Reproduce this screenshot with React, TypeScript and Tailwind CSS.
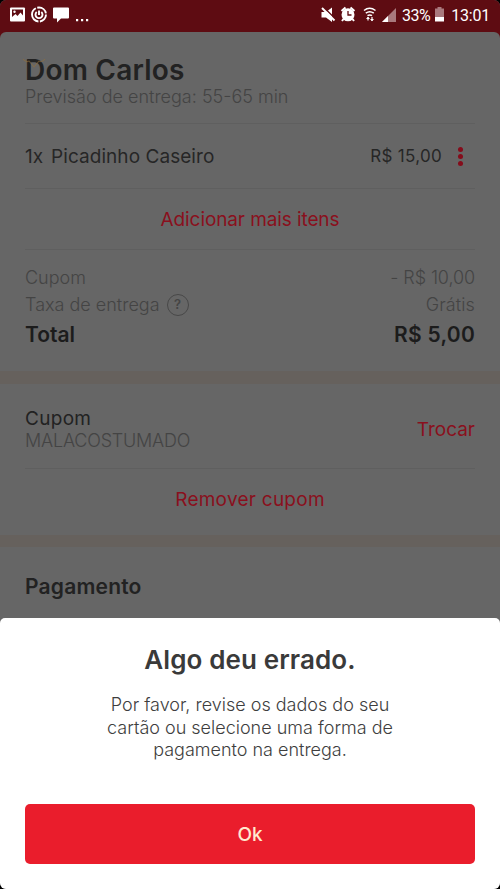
import React from "react";

function Divider() {
  return <div className="mx-[25px] h-px shrink-0 bg-[#5f5f5f]" />;
}

function LeftIcons() {
  return (
    <svg width="90" height="30" viewBox="0 0 90 30" className="shrink-0">
      <path d="M11 7.500h13a1 1 0 0 1 1 1v12a1 1 0 0 1-1 1h-13a1 1 0 0 1-1-1v-12a1 1 0 0 1 1-1z" fill="#fff" />
      <path d="M12 9.500h11v6l-2.500-3-3 3.500-2-2L12 17z" fill="#5e0c12" />
      <circle cx="14.500" cy="11.800" r="1.200" fill="#fff" />
      <circle cx="39" cy="14.500" r="7" fill="none" stroke="#fff" strokeWidth="1.900" strokeDasharray="10 1.5 18 1.5 11.5 1.5" />
      <path d="M36.700 12a3.500 3.500 0 1 0 4.600 0M39 10.500v4.500" fill="none" stroke="#fff" strokeWidth="1.900" />
      <path d="M54 7.500h14a1 1 0 0 1 1 1v9a1 1 0 0 1-1 1h-7l-4 4v-4h-3a1 1 0 0 1-1-1v-9a1 1 0 0 1 1-1z" fill="#fff" />
      <path d="M76 19h2.200v2.200H76zM81 19h2.200v2.200H81zM86 19h2.200v2.200H86z" fill="#fff" />
    </svg>
  );
}

function RightIcons() {
  return (
    <svg width="80" height="30" viewBox="320 0 80 30" className="shrink-0">
      <path d="M321.500 12h4.500l6-4.500v14.500l-6-4.500h-4.500z" fill="#fff" />
      <path d="M323.500 7l12 12" stroke="#5e0c12" strokeWidth="1.500" />
      <path d="M322 8l12.500 12.500" stroke="#fff" strokeWidth="2" />
      <circle cx="348" cy="14.800" r="6.500" fill="#fff" />
      <path d="M341.500 11l4-3.500M354.500 11l-4-3.500M343.500 19l-1.500 2M352.500 19l1.500 2" stroke="#fff" strokeWidth="2" />
      <path d="M348 11v4h3.500" stroke="#5e0c12" strokeWidth="1.300" fill="none" />
      <path d="M364 10.500q5.500-4.500 11.500 0M365.800 13.200q3.900-3 8 0M367.500 15.700q2.200-1.500 4.500 0" stroke="#fff" strokeWidth="1.500" fill="none" />
      <path d="M368 17v3.500M372 17v4" stroke="#fff" strokeWidth="1.200" />
      <path d="M366 19l2-2.200 2 2.200zM370 19l2 2.200 2-2.200z" fill="#fff" />
      <path d="M396 8v14h-14z" fill="#a9797d" />
      <path d="M388 16v6h-6z" fill="#fff" />
    </svg>
  );
}

function StatusBar() {
  return (
    <div className="flex h-8 shrink-0 items-start bg-[#5e0c12] text-white">
      <LeftIcons />
      <div className="flex-1" />
      <RightIcons />
      <span className="ml-[2px] w-[29px] font-['Roboto'] text-[16px] leading-[32px] tracking-[-0.5px]">33%</span>
      <svg width="18" height="30" viewBox="0 0 18 30" className="shrink-0">
        <path d="M6.500 7h4v1.500H13V17H4V8.500h2.500z" fill="#a9797d" />
        <path d="M4 17h9v4.500H4z" fill="#fff" />
      </svg>
      <span className="mr-[10px] flex w-[41px] justify-end font-['Roboto'] text-[16px] leading-[32px] tracking-[-0.2px]">13:01</span>
    </div>
  );
}

function Summary() {
  return (
    <section className="flex h-[339px] shrink-0 flex-col">
      <header className="relative h-[91px] shrink-0 px-[25px] pt-[20px]">
        <h1 className="text-[28px] leading-[36px] font-semibold tracking-[0.2px] whitespace-nowrap text-[#222]">Dom Carlos</h1>
        <svg width="24" height="14" viewBox="0 0 24 14" className="absolute top-[25px] left-[22px]">
          <path d="M1 2q3 4 6 2l5 6 5-6q3 2 6-2" fill="none" stroke="#94703a" strokeOpacity="0.6" strokeWidth="1.100" />
        </svg>
        <p className="text-[18px] leading-[18px] font-light whitespace-nowrap text-[#444]">Previsão de entrega: 55-65 min</p>
      </header>
      <Divider />
      <div className="flex h-[64px] shrink-0 items-center px-[25px] whitespace-nowrap text-[#262626]">
        <span className="pt-[2px] text-[19px]">1x</span>
        <span className="ml-[8px] pt-[2px] text-[19px] tracking-[0.05px]">Picadinho Caseiro</span>
        <span className="ml-auto pt-[1px] text-[17px] tracking-[0.3px]">R$ 15,00</span>
        <span className="mr-[12px] ml-[16px] flex flex-col gap-[2px]">
          <i className="size-[5px] rounded-full bg-[#850c1b]" />
          <i className="size-[5px] rounded-full bg-[#850c1b]" />
          <i className="size-[5px] rounded-full bg-[#850c1b]" />
        </span>
      </div>
      <Divider />
      <button className="h-[60px] shrink-0 pt-[2px] text-center text-[19px] tracking-[-0.1px] text-[#8a101d]">Adicionar mais itens</button>
      <Divider />
      <div className="flex flex-col px-[25px] pt-[14px] text-[18px] font-light whitespace-nowrap text-[#444]">
        <div className="flex h-[27px] items-center justify-between">
          <span>Cupom</span>
          <span className="tracking-[-0.1px]">- R$ 10,00</span>
        </div>
        <div className="flex h-[27px] items-center">
          <span>Taxa de entrega</span>
          <span className="ml-[7px] flex size-[22px] items-center justify-center rounded-full border border-[#484848] text-[13px] font-semibold">?</span>
          <span className="ml-auto tracking-[0.1px]">Grátis</span>
        </div>
        <div className="flex h-[34px] items-center justify-between text-[21px] font-semibold text-[#1c1c1c]">
          <span>Total</span>
          <span className="tracking-[0.25px]">R$ 5,00</span>
        </div>
      </div>
    </section>
  );
}

function Coupon() {
  return (
    <section className="flex h-[151px] shrink-0 flex-col">
      <div className="flex h-[84px] shrink-0 items-center justify-between px-[25px] pt-[6px]">
        <div className="whitespace-nowrap">
          <p className="text-[19px] leading-[23px] tracking-[0.3px] text-[#222]">Cupom</p>
          <p className="text-[18px] leading-[22px] font-light tracking-[-0.2px] text-[#444]">MALACOSTUMADO</p>
        </div>
        <span className="pt-[2px] text-[19px] text-[#8a101d]">Trocar</span>
      </div>
      <Divider />
      <button className="h-[62px] shrink-0 text-center text-[19px] tracking-[0.25px] text-[#8a101d]">Remover cupom</button>
    </section>
  );
}

function ErrorSheet() {
  return (
    <section className="flex h-[271px] shrink-0 flex-col items-center rounded-t-[5px] bg-white px-[25px] pt-[24px] text-center whitespace-nowrap">
      <h2 className="text-[26px] leading-[36px] font-semibold tracking-[0.1px] text-[#3a3a3a]">Algo deu errado.</h2>
      <p className="mt-[16px] text-[18px] leading-[22.5px] font-light text-[#3e3e3e]">
        Por favor, revise os dados do seu
        <br />
        cartão ou selecione uma forma de
        <br />
        pagamento na entrega.
      </p>
      <button className="mt-auto mb-[25px] h-[60px] w-full rounded-[5px] bg-[#ea1d2c] pt-[2px] text-[19px] font-medium text-[#ffe9cf]">Ok</button>
    </section>
  );
}

export default function App() {
  return (
    <div className="h-[889px] w-[500px] overflow-hidden bg-black font-['Inter','Liberation_Sans',sans-serif]">
      <div className="flex h-full flex-col overflow-hidden rounded-[6px] bg-[#666]">
        <StatusBar />
        <div className="flex flex-1 flex-col bg-[#5e0c12]">
          <main className="flex flex-1 flex-col rounded-t-[6px] bg-[#666]">
            <Summary />
            <div className="h-[13px] shrink-0 bg-[#66615d]" />
            <Coupon />
            <div className="h-[12px] shrink-0 bg-[#66615d]" />
            <h3 className="px-[25px] pt-[25px] text-[21px] leading-[30px] font-semibold tracking-[0.2px] text-[#222]">Pagamento</h3>
          </main>
        </div>
        <ErrorSheet />
      </div>
    </div>
  );
}
